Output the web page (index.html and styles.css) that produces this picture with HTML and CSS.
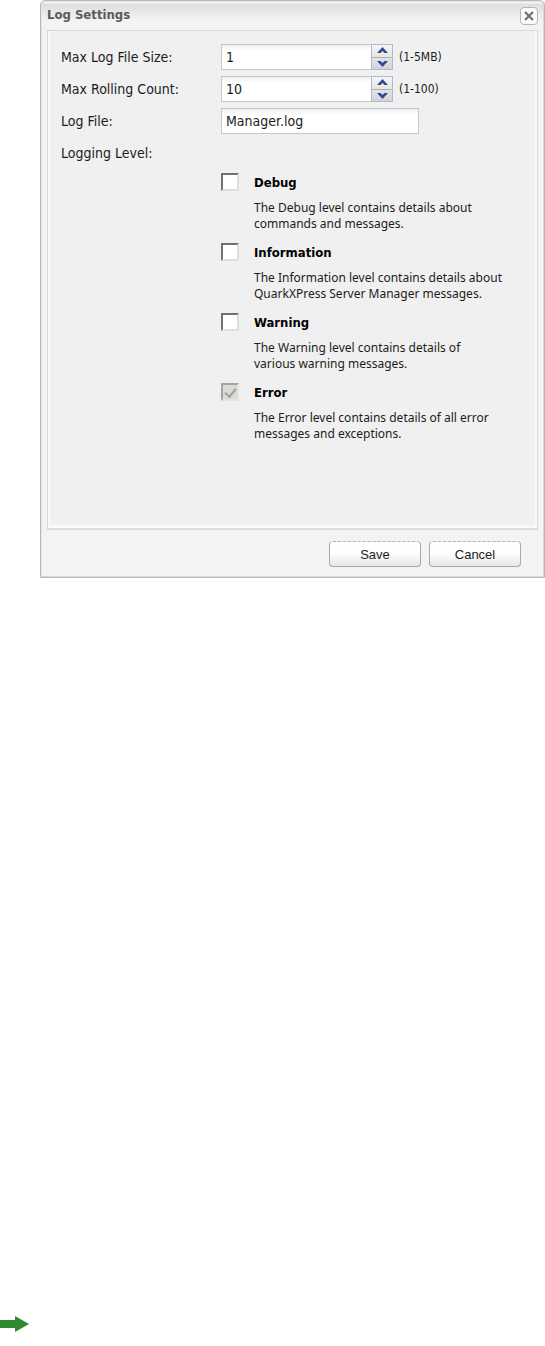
FILE: index.html
```html
<!DOCTYPE html>
<html lang="en">
<head>
  <meta charset="UTF-8" />
  <meta name="viewport" content="width=device-width, initial-scale=1.0" />
  <title>Log Settings</title>
  <link rel="stylesheet" href="styles.css">
</head>
<body>
  <form class="dialog">
    <div class="title-bar">
      <h2>Log Settings</h2>
      <button type="button" class="close" aria-label="Close">
        <svg width="10" height="10" viewBox="0 0 10 10"><path d="M1 1L9 9M9 1L1 9" stroke="#707070" stroke-width="2.2"/></svg>
      </button>
    </div>

    <div class="panel">
      <div class="row">
        <label for="maxSize">Max Log File Size:</label>
        <div class="spinner">
          <input type="text" id="maxSize" value="1" />
          <div class="arrows">
            <button type="button" aria-label="Increase size"><svg width="11" height="7" viewBox="0 0 11 7"><path d="M0 6L5.5 0L11 6H7.5L5.5 4L3.5 6Z" /></svg></button>
            <button type="button" aria-label="Decrease size"><svg width="11" height="7" viewBox="0 0 11 7"><path d="M0 1L5.5 7L11 1H7.5L5.5 3L3.5 1Z" /></svg></button>
          </div>
        </div>
        <span class="range">(1-5MB)</span>
      </div>
      <div class="row">
        <label for="maxCount">Max Rolling Count:</label>
        <div class="spinner">
          <input type="text" id="maxCount" value="10" />
          <div class="arrows">
            <button type="button" aria-label="Increase count"><svg width="11" height="7" viewBox="0 0 11 7"><path d="M0 6L5.5 0L11 6H7.5L5.5 4L3.5 6Z" /></svg></button>
            <button type="button" aria-label="Decrease count"><svg width="11" height="7" viewBox="0 0 11 7"><path d="M0 1L5.5 7L11 1H7.5L5.5 3L3.5 1Z" /></svg></button>
          </div>
        </div>
        <span class="range">(1-100)</span>
      </div>
      <div class="row">
        <label for="logFile">Log File:</label>
        <input type="text" id="logFile" class="file" value="Manager.log" />
      </div>
      <div class="row">
        <span>Logging Level:</span>
      </div>

      <div class="levels">
        <div class="level">
          <input type="checkbox" id="debug" />
          <label for="debug">Debug</label>
          <p>The Debug level contains details about<br>commands and messages.</p>
        </div>
        <div class="level">
          <input type="checkbox" id="information" />
          <label for="information">Information</label>
          <p>The Information level contains details about<br>QuarkXPress Server Manager messages.</p>
        </div>
        <div class="level">
          <input type="checkbox" id="warning" />
          <label for="warning">Warning</label>
          <p>The Warning level contains details of<br>various warning messages.</p>
        </div>
        <div class="level">
          <input type="checkbox" id="error" checked disabled />
          <label for="error">Error</label>
          <p>The Error level contains details of all error<br>messages and exceptions.</p>
        </div>
      </div>
    </div>

    <div class="actions">
      <button type="submit">Save</button>
      <button type="button">Cancel</button>
    </div>
  </form>

  <svg class="next" width="29" height="16" viewBox="0 0 29 16"><path d="M0 4H15V0L29 8L15 16V12H0Z" fill="#2f8a2f"/></svg>
</body>
</html>
```

FILE: styles.css
```css
* {
  box-sizing: border-box;
}
body {
  margin: 0;
  min-height: 100vh;
  display: flex;
  flex-direction: column;
  background: #fff;
  color: #1c1c1c;
  font-family: "DejaVu Sans Condensed", Tahoma, sans-serif;
  font-size: 14px;
}
button, input {
  margin: 0;
  padding: 0;
  font: inherit;
  color: inherit;
}
svg {
  display: block;
}
.dialog {
  margin-left: 40px;
  padding: 0 6px 10px;
  background: linear-gradient(#f3f3f3 2px, #dedede 3px, #f3f3f3 20px);
  border: 1px solid #b8b8b8;
  border-radius: 5px 5px 0 0;
  box-shadow: inset -1px -1px #d8d8d8, inset 1px 1px #e4e4e4;
}
.title-bar {
  display: flex;
  align-items: center;
  justify-content: space-between;
  height: 29px;
}
.title-bar h2 {
  margin: 0;
  padding-bottom: 2px;
  font-size: 13px;
  color: #5a5a5a;
}
.close {
  display: flex;
  align-items: center;
  justify-content: center;
  width: 18px;
  height: 18px;
  background: #fafafa;
  border: 1px solid #b5b5b5;
  border-radius: 4px;
}
.panel {
  min-height: 500px;
  padding: 10px 13px;
  background: #f0f0f0;
  border: 1px solid #d8d8d8;
  border-bottom: 2px solid #dcdcdc;
  box-shadow: inset 2px -3px 2px #fafafa, inset -2px 0 1px #fafafa;
}
.row {
  display: grid;
  grid-template-columns: 160px auto 1fr;
  align-items: center;
  height: 32px;
}
.spinner {
  display: flex;
  width: 172px;
  height: 26px;
}
.spinner input, .file {
  min-width: 0;
  height: 26px;
  padding: 0 4px;
  background: linear-gradient(#edf1f2, #fff 6px);
  border: 1px solid #c3c7c9;
}
.spinner input {
  flex: 1;
  border-right: none;
}
.file {
  width: 198px;
}
.arrows {
  display: flex;
  flex-direction: column;
  width: 22px;
  border: 1px solid #b4b8cc;
  background: linear-gradient(#f6f6f8, #d4d4d8);
}
.arrows button {
  display: flex;
  flex: 1;
  align-items: center;
  justify-content: center;
  background: none;
  border: none;
}
.arrows button + button {
  border-top: 1px solid #b5b1a2;
}
.arrows path {
  fill: #2b4c92;
}
.range {
  padding-left: 6px;
  font-size: 12px;
}
.levels {
  padding-left: 160px;
}
.level {
  display: grid;
  grid-template-columns: 18px 1fr;
  grid-template-rows: 26px 44px;
  align-items: center;
  column-gap: 15px;
}
.level input {
  appearance: none;
  width: 18px;
  height: 18px;
  background: #fff;
  border: 2px solid;
  border-color: #707070 #e0ded8 #e0ded8 #707070;
}
.level input:disabled {
  background: #dcdad5;
  border-color: #a3a3a3 #e6e4df #e6e4df #a3a3a3;
}
.level input:checked::before {
  content: "";
  display: block;
  width: 5px;
  height: 9px;
  margin: 1px 4px;
  border: solid #a09e99;
  border-width: 0 2px 2px 0;
  transform: rotate(40deg);
}
.level label {
  font-size: 13px;
  font-weight: bold;
  color: #000;
}
.level p {
  grid-column: 2;
  align-self: start;
  margin: 5px 0 0;
  font-family: "Noto Sans", Tahoma, sans-serif;
  font-size: 12px;
  line-height: 16px;
}
.actions {
  display: flex;
  justify-content: flex-end;
  gap: 8px;
  padding: 11px 17px 0;
}
.actions button {
  width: 92px;
  height: 26px;
  font-family: "Liberation Sans", Arial, sans-serif;
  font-size: 13px;
  background: linear-gradient(#fff, #fdfdfd 50%, #e6e6e6);
  border: 1px solid #a8a8a8;
  border-top: 1px dashed #b5b5b5;
  border-radius: 4px;
}
.next {
  margin: auto 0 14px;
}
```
